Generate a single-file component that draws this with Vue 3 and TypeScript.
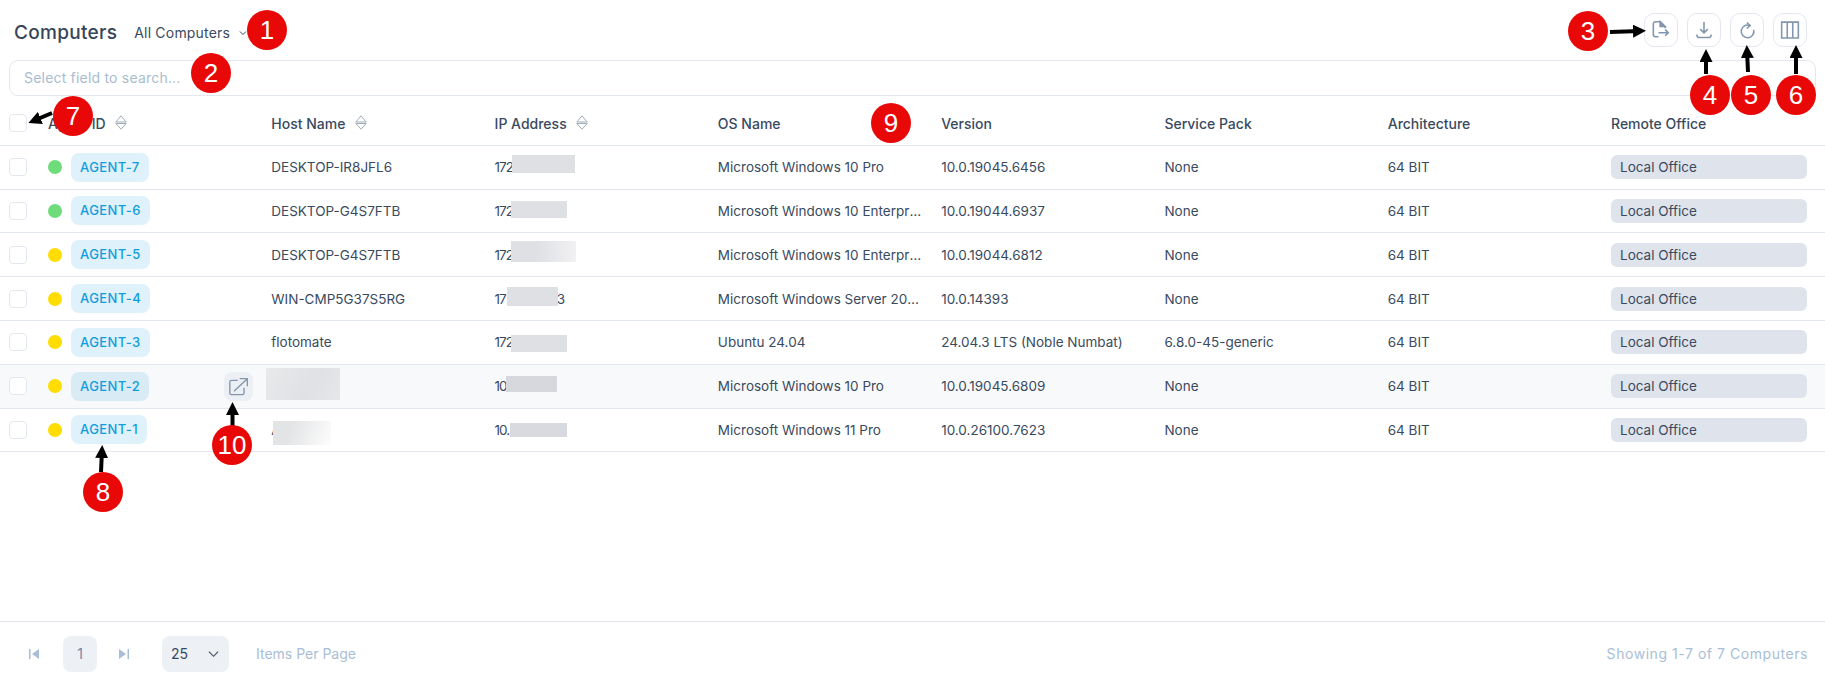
<template>
  <div class="page">
    <header class="top">
      <h1 class="title">Computers</h1>
      <button class="scope">
        All Computers
        <svg class="scope-chevron" viewBox="0 0 10 10"><path d="M2 3.500 5 6.500 8 3.500" /></svg>
      </button>
      <div class="tools">
        <button class="tool">
          <svg viewBox="0 0 24 24">
            <path d="M9 20H5.300a2.500 2.500 0 0 1-2.500-2.500V4.500A2.500 2.500 0 0 1 5.300 2H11l5.800 5.800V10" />
            <path class="solid" d="M11 2l5.800 5.800H11z" />
            <path d="M9 15.200h11.500M17 11.500l3.700 3.700-3.700 3.700" />
          </svg>
        </button>
        <button class="tool">
          <svg viewBox="0 0 24 24">
            <path d="M12 2.500v13M7.500 11 12 15.500 16.500 11" />
            <path d="M3.500 17.500v1A2.500 2.500 0 0 0 6 21h12a2.500 2.500 0 0 0 2.500-2.500v-1" />
          </svg>
        </button>
        <button class="tool">
          <svg viewBox="0 0 24 24">
            <path d="M15.500 6.600A7.600 7.600 0 1 0 20 11.700" />
            <path d="M11.800 3 15.800 6.600 11.800 10.200" />
          </svg>
        </button>
        <button class="tool">
          <svg viewBox="0 0 24 24">
            <path d="M2 2.500h20v19H2zM8.700 2.500v19M15.300 2.500v19" />
          </svg>
        </button>
      </div>
    </header>

    <div class="search">Select field to search...</div>

    <div class="grid-row head">
      <div class="cell"><span class="check" /></div>
      <div v-for="col in columns" :key="col.label" class="cell">
        {{ col.label }}
        <svg v-if="col.sortable" class="sort" viewBox="0 0 12 15">
          <path d="M6 0.800 11.200 7H0.800zM0.800 8.500H11.200L6 14.200z" />
        </svg>
      </div>
    </div>

    <div
      v-for="row in rows"
      :key="row.agent"
      class="grid-row body"
      :class="{ hovered: row.hovered }"
    >
      <div class="cell"><span class="check" /></div>
      <div class="cell agent">
        <span class="dot" :class="row.online ? 'online' : 'idle'" />
        <span class="chip">{{ row.agent }}</span>
        <span v-if="row.hovered" class="open">
          <svg viewBox="0 0 24 24">
            <path d="M10.500 5.200H3a2 2 0 0 0-2 2v13.200a2 2 0 0 0 2 2h13a2 2 0 0 0 2-2V14" />
            <path d="M6 18.400 22 3.200M12.800 3.200H22v9.200" />
          </svg>
        </span>
      </div>
      <div class="cell">{{ row.host }}</div>
      <div class="cell ip">{{ row.ip }}<span v-if="row.ipTail" class="ip-tail">{{ row.ipTail }}</span></div>
      <div class="cell"><span class="clip">{{ row.os }}</span></div>
      <div class="cell">{{ row.version }}</div>
      <div class="cell">{{ row.servicePack }}</div>
      <div class="cell">64 BIT</div>
      <div class="cell office"><span class="office-chip">Local Office</span></div>
    </div>

    <footer class="foot">
      <svg class="pager first" viewBox="0 0 10 10"><path d="M0 0h1.500v10H0zM10 0v10L3 5z" /></svg>
      <span class="page-no">1</span>
      <svg class="pager last" viewBox="0 0 10 10"><path d="M10 0H8.500v10H10zM0 0v10l7-5z" /></svg>
      <div class="per-page">
        25
        <svg viewBox="0 0 12 8"><path d="M1 1.500 6 6.500 11 1.500" /></svg>
      </div>
      <span class="per-label">Items Per Page</span>
      <span class="count">Showing 1-7 of 7 Computers</span>
    </footer>

    <!-- redactions from the screenshot -->
    <span
      v-for="(m, i) in masks"
      :key="i"
      class="mask"
      :style="{ left: m.x + 'px', top: m.y + 'px', width: m.w + 'px', height: m.h + 'px', background: m.fill }"
    />

    <!-- callouts -->
    <svg class="arrows" viewBox="0 0 1825 677">
      <defs>
        <marker id="tip" markerUnits="userSpaceOnUse" markerWidth="13" markerHeight="13" refX="8" refY="6.5" orient="auto">
          <path d="M0 0 13 6.500 0 13z" />
        </marker>
      </defs>
      <line
        v-for="(a, i) in arrows"
        :key="i"
        :x1="a[0]"
        :y1="a[1]"
        :x2="a[2]"
        :y2="a[3]"
        marker-end="url(#tip)"
      />
    </svg>
    <span
      v-for="b in badges"
      :key="b.n"
      class="badge"
      :style="{ left: b.x - 20 + 'px', top: b.y - 20 + 'px' }"
    >{{ b.n }}</span>
  </div>
</template>

<script setup lang="ts">
interface Row {
  agent: string
  online: boolean
  host: string
  ip: string
  ipTail?: string
  os: string
  version: string
  servicePack: string
  hovered?: boolean
}

const columns = [
  { label: 'Agent ID', sortable: true },
  { label: 'Host Name', sortable: true },
  { label: 'IP Address', sortable: true },
  { label: 'OS Name', sortable: false },
  { label: 'Version', sortable: false },
  { label: 'Service Pack', sortable: false },
  { label: 'Architecture', sortable: false },
  { label: 'Remote Office', sortable: false }
]

const rows: Row[] = [
  { agent: 'AGENT-7', online: true, host: 'DESKTOP-IR8JFL6', ip: '172', os: 'Microsoft Windows 10 Pro', version: '10.0.19045.6456', servicePack: 'None' },
  { agent: 'AGENT-6', online: true, host: 'DESKTOP-G4S7FTB', ip: '172', os: 'Microsoft Windows 10 Enterprise', version: '10.0.19044.6937', servicePack: 'None' },
  { agent: 'AGENT-5', online: false, host: 'DESKTOP-G4S7FTB', ip: '172', os: 'Microsoft Windows 10 Enterprise', version: '10.0.19044.6812', servicePack: 'None' },
  { agent: 'AGENT-4', online: false, host: 'WIN-CMP5G37S5RG', ip: '17', ipTail: '3', os: 'Microsoft Windows Server 2016 Standard', version: '10.0.14393', servicePack: 'None' },
  { agent: 'AGENT-3', online: false, host: 'flotomate', ip: '172', os: 'Ubuntu 24.04', version: '24.04.3 LTS (Noble Numbat)', servicePack: '6.8.0-45-generic' },
  { agent: 'AGENT-2', online: false, host: '', ip: '10', os: 'Microsoft Windows 10 Pro', version: '10.0.19045.6809', servicePack: 'None', hovered: true },
  { agent: 'AGENT-1', online: false, host: 'A', ip: '10.', os: 'Microsoft Windows 11 Pro', version: '10.0.26100.7623', servicePack: 'None' }
]

const grey = '#dfe0e4'
const masks = [
  { x: 512, y: 155, w: 63, h: 18, fill: grey },
  { x: 511, y: 201, w: 56, h: 17, fill: grey },
  { x: 511, y: 241, w: 65, h: 21, fill: 'linear-gradient(90deg, #dfe0e4 40%, #f1f1f3)' },
  { x: 507, y: 287, w: 51, h: 19, fill: grey },
  { x: 511, y: 335, w: 56, h: 17, fill: grey },
  { x: 266, y: 368, w: 74, h: 32, fill: 'linear-gradient(120deg, #e9e9eb, #dfe1e4 60%, #e6e7e9)' },
  { x: 506, y: 376, w: 51, h: 16, fill: '#d6d8dd' },
  { x: 273, y: 421, w: 58, h: 24, fill: 'linear-gradient(110deg, #e3e4e6 30%, #fdfdfd)' },
  { x: 510, y: 423, w: 57, h: 14, fill: '#d9dadf' }
]

const badges = [
  { n: 1, x: 267, y: 30 },
  { n: 2, x: 211, y: 73 },
  { n: 3, x: 1588, y: 31 },
  { n: 4, x: 1710, y: 95 },
  { n: 5, x: 1751, y: 95 },
  { n: 6, x: 1796, y: 95 },
  { n: 7, x: 73, y: 116 },
  { n: 8, x: 103, y: 492 },
  { n: 9, x: 891, y: 123 },
  { n: 10, x: 232, y: 445 }
]

// x1, y1, x2, y2 of each shaft; the head adds 5px past the end
const arrows = [
  [1610, 32, 1641, 31],
  [1706, 74, 1706, 54],
  [1748, 72, 1747, 50],
  [1796, 74, 1796, 50],
  [52, 113, 33, 121],
  [101, 472, 102, 450],
  [232.5, 426, 232.5, 407]
]
</script>

<style scoped>
.page {
  position: relative;
  width: 1825px;
  height: 677px;
  display: flex;
  flex-direction: column;
  overflow: hidden;
  background: #fff;
  color: #3a4a5e;
  font-family: Inter, 'Open Sans', sans-serif;
  font-size: 14px;
}

.top {
  display: flex;
  align-items: center;
  height: 34px;
  margin-top: 13px;
  padding: 0 18px 0 14px;
}

.title {
  margin: 5px 0 0;
  font-size: 19px;
  font-weight: 500;
  letter-spacing: 0.3px;
  color: #364658;
}

.scope {
  display: flex;
  align-items: center;
  gap: 8px;
  margin: 5px 0 0 17px;
  padding: 0;
  border: 0;
  background: none;
  color: #3a4a5e;
  font: inherit;
  letter-spacing: 0.2px;
}

.scope-chevron {
  width: 10px;
  height: 10px;
  fill: none;
  stroke: #3a4a5e;
  stroke-width: 1;
}

.tools {
  display: flex;
  gap: 9px;
  margin-left: auto;
}

.tool {
  width: 34px;
  height: 34px;
  display: flex;
  align-items: center;
  justify-content: center;
  padding: 0;
  background: #fff;
  border: 1px solid #e2e7f0;
  border-radius: 10px;
}

.tool svg {
  width: 20px;
  height: 20px;
  fill: none;
  stroke: #8296ad;
  stroke-width: 1.9;
}

.tool .solid {
  fill: #8296ad;
}

.search {
  display: flex;
  align-items: center;
  height: 36px;
  margin: 13px 9px 0;
  padding: 0 0 2px 14px;
  border: 1px solid #e2e7f0;
  border-radius: 9px;
  box-sizing: border-box;
  color: #a9bcd0;
  letter-spacing: 0.2px;
}

.grid-row {
  display: grid;
  grid-template-columns: 48px repeat(7, 1fr) 214px;
  align-items: center;
  height: 43.8px;
  box-sizing: border-box;
  border-bottom: 1px solid #e2e7ef;
  font-size: 13.5px;
}

.head {
  margin-top: 6px;
  font-size: 14px;
  font-weight: 500;
}

.hovered {
  background: #f8f9fb;
}

.cell {
  display: flex;
  align-items: center;
  min-width: 0;
  white-space: pre;
}

.clip {
  overflow: hidden;
  text-overflow: ellipsis;
  padding-right: 18px;
}

.check {
  width: 18px;
  height: 18px;
  margin-left: 9px;
  background: #fff;
  border: 1px solid #e2e7f0;
  border-radius: 4px;
  box-sizing: border-box;
}

.sort {
  width: 12px;
  height: 15px;
  margin: -2px 0 0 6px;
  fill: none;
  stroke: #a2adba;
  stroke-width: 1;
}

.agent {
  position: relative;
  gap: 9px;
}

.dot {
  width: 14px;
  height: 14px;
  border-radius: 50%;
}

.online {
  background: #6fdc7c;
}

.idle {
  background: #ffdd00;
}

.chip {
  padding: 0 9px;
  height: 29px;
  line-height: 29px;
  border-radius: 8px;
  background: #dff1fa;
  color: #119ddd;
  font-size: 13px;
  font-weight: 500;
  letter-spacing: 0.4px;
}

.hovered .chip {
  background: #d9ecf6;
}

.open {
  position: absolute;
  left: 176px;
  top: 0;
  width: 29px;
  height: 29px;
  display: flex;
  align-items: center;
  justify-content: center;
  border-radius: 8px;
  background: #eceff4;
}

.open svg {
  width: 20px;
  height: 20px;
  fill: none;
  stroke: #8296ad;
  stroke-width: 1.6;
}

.ip {
  letter-spacing: -1px;
}

.ip-tail {
  margin-left: 51px;
}

.office {
  padding-right: 18px;
}

.office-chip {
  flex: 1;
  height: 24px;
  line-height: 24px;
  padding-left: 9px;
  border-radius: 6px;
  background: #dfe4ec;
}

.foot {
  display: flex;
  align-items: center;
  margin-top: auto;
  height: 56px;
  padding: 8px 17px 0 29px;
  box-sizing: border-box;
  border-top: 1px solid #e2e7ef;
  color: #a9bed6;
}

.pager {
  width: 10px;
  height: 10px;
  fill: #a9bed6;
}

.page-no {
  width: 34px;
  height: 36px;
  margin: 0 22px 0 24px;
  line-height: 36px;
  text-align: center;
  border-radius: 8px;
  background: #edf0f5;
  color: #6f8aa8;
}

.per-page {
  display: flex;
  align-items: center;
  justify-content: space-between;
  width: 67px;
  height: 36px;
  margin: 0 27px 0 33px;
  padding: 0 10px 0 9px;
  box-sizing: border-box;
  border-radius: 8px;
  background: #edf0f5;
  color: #3a4a5e;
}

.per-page svg {
  width: 11px;
  height: 8px;
  fill: none;
  stroke: #3a4a5e;
  stroke-width: 1.2;
}

.count {
  margin-left: auto;
  letter-spacing: 0.55px;
}

.mask {
  position: absolute;
}

.arrows {
  position: absolute;
  left: 0;
  top: 0;
  width: 1825px;
  height: 677px;
  pointer-events: none;
}

.arrows line {
  stroke: #000;
  stroke-width: 4;
}

.badge {
  position: absolute;
  width: 40px;
  height: 40px;
  line-height: 40px;
  text-align: center;
  border-radius: 50%;
  background: #e90808;
  color: #fff;
  font-family: 'Liberation Sans', Arial, sans-serif;
  font-size: 26px;
}
</style>
